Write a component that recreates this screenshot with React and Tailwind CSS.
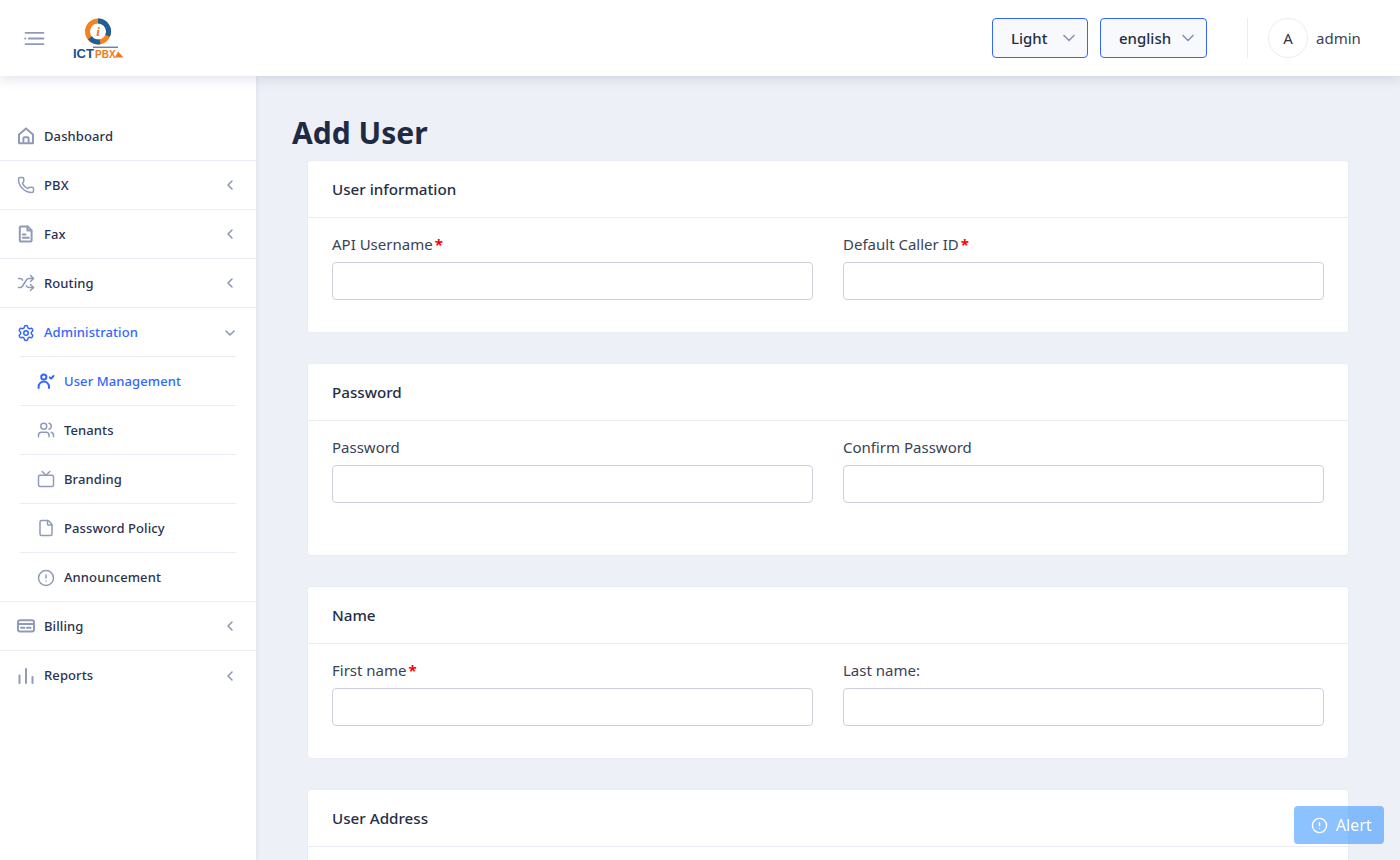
import { ChevronDown, ChevronLeft, CircleAlert, File, Phone, Settings, Shuffle, Tv, Users } from 'lucide-react';

const font = { fontFamily: '"Noto Sans", "Open Sans", sans-serif' };

const HomeIcon = (props) => (
  <svg viewBox="0 0 18 18" fill="none" stroke="currentColor" strokeWidth="1.7" strokeLinejoin="round" {...props}>
    <path d="M2 16.2V7.4L9 1.4l7 6v8.8z" />
    <path d="M6.4 16.2v-5a1 1 0 0 1 1-1h3.2a1 1 0 0 1 1 1v5" />
  </svg>
);

const FaxIcon = (props) => (
  <svg viewBox="0 0 18 18" fill="none" stroke="currentColor" strokeWidth="1.7" strokeLinejoin="round" strokeLinecap="round" {...props}>
    <path d="M4 1.4h6.6l4 4v10a1.2 1.2 0 0 1-1.2 1.2H4a1.2 1.2 0 0 1-1.2-1.2V2.6A1.2 1.2 0 0 1 4 1.4z" />
    <path d="M10.4 1.6v3.8h4M5.8 9.6h2.6M5.8 12.8h6" />
  </svg>
);

const UserCheckIcon = (props) => (
  <svg viewBox="0 0 18 18" fill="none" stroke="currentColor" strokeWidth="1.8" strokeLinecap="round" strokeLinejoin="round" {...props}>
    <circle cx="6.8" cy="5" r="2.6" />
    <path d="M1.6 16v-1.2a5.2 5.2 0 0 1 10.4 0V16" />
    <path d="M12.8 5.4l1.3 1.2 2.4-2.6" />
  </svg>
);

const CardIcon = (props) => (
  <svg viewBox="0 0 18 18" fill="none" stroke="currentColor" strokeWidth="1.7" strokeLinecap="round" {...props}>
    <rect x="1" y="3.2" width="16" height="11.4" rx="2" />
    <path d="M1 7h16M4 10.8h3.4M10 10.8h3.6" />
  </svg>
);

const ReportsIcon = (props) => (
  <svg viewBox="0 0 18 18" fill="none" stroke="currentColor" strokeWidth="1.7" strokeLinecap="round" {...props}>
    <path d="M2.5 8.5V16M9 2v14M15.5 10v6" />
  </svg>
);

const MenuIcon = (props) => (
  <svg viewBox="0 0 22 16" fill="none" stroke="currentColor" strokeWidth="2" strokeLinecap="round" {...props}>
    <path d="M1.5 2h19M5 8h15.5M1.5 14h19M1 8h.2" />
  </svg>
);

const Logo = () => (
  <svg viewBox="0 0 52 42" className="w-[52px] h-[42px]">
    <circle cx="25" cy="13.5" r="10.5" fill="none" stroke="#f58220" strokeWidth="5" />
    <path d="M25 3a10.5 10.5 0 0 1 9.6 14.8" fill="none" stroke="#1d5f96" strokeWidth="5" />
    <path d="M27 23.8a10.5 10.5 0 0 1-10-4" fill="none" stroke="#1d5f96" strokeWidth="5" />
    <circle cx="25" cy="13.5" r="6" fill="#fff" />
    <text x="25" y="18" textAnchor="middle" fontSize="13" fontWeight="700" fontStyle="italic" fill="#e8731c" fontFamily="Liberation Serif, serif">i</text>
    <text x="0" y="39.5" fontSize="13" fill="#17508a" fontWeight="700" fontFamily="Liberation Sans, sans-serif">ICT</text>
    <text x="22" y="39.5" fontSize="10" fontWeight="700" fill="#ee7a22" fontFamily="Liberation Sans, sans-serif">PBX</text>
    <path d="M20 29.2h25" stroke="#17508a" strokeWidth="1" />
    <path d="M42 39.5l3-6 5.5 6z" fill="#ee7a22" />
  </svg>
);

const MenuItem = ({ icon: Icon, label, arrow, active, open, sub, last }) => (
  <div className={sub ? 'px-5' : ''}>
    <div
      className={`h-[49px] flex items-center ${sub ? 'pl-[17px]' : 'px-[17px]'} ${last ? '' : 'border-b border-[#e9ecf4]'} ${
        active ? 'text-[#3366ff]' : 'text-[#2b3350]'
      }`}
    >
      <Icon className={`w-[18px] h-[18px] shrink-0 ${active ? 'text-[#3366ff]' : 'text-[#8f9bb8]'}`} strokeWidth={2} />
      <span className="ml-[9px] text-[13px] tracking-[0.1px] font-medium leading-none">{label}</span>
      {arrow && (
        open ? (
          <ChevronDown className="ml-auto mr-px w-4 h-4 text-[#8a94ad]" strokeWidth={2.2} />
        ) : (
          <ChevronLeft className="ml-auto mr-px w-4 h-4 text-[#8a94ad]" strokeWidth={2.2} />
        )
      )}
    </div>
  </div>
);

const Field = ({ label, required }) => (
  <div>
    <label className="block h-[18px] text-[15px] leading-[18px] text-[#3a4256]">
      {label}
      {required && <span className="ml-[2px] font-bold text-[#ff0000]">*</span>}
    </label>
    <input className="block mt-[9px] w-full h-[38px] rounded border border-[#ced1d9] bg-white" />
  </div>
);

const Card = ({ title, fields, extra, children }) => (
  <section className="bg-white rounded border border-[#e9ecf4]">
    <h2 className="h-[57px] px-6 flex items-center border-b border-[#e9ecf4] text-[15.2px] font-medium text-[#252e45]">
      {title}
    </h2>
    {fields && (
      <div className={`px-6 pt-[17px] grid grid-cols-2 gap-[30px] ${extra ? 'pb-[52px]' : 'pb-[32px]'}`}>
        {fields.map((f) => (
          <Field key={f.label} {...f} />
        ))}
      </div>
    )}
    {children}
  </section>
);

const SelectBox = ({ label, width }) => (
  <div className={`${width} h-10 flex items-center justify-between pl-[18px] pr-2 rounded border border-[#3366ff] bg-[#f8f9fd] text-[#252e45]`}>
    <span className="text-[15px] font-medium">{label}</span>
    <ChevronDown className="w-5 h-5 text-[#8a94ad]" strokeWidth={2} />
  </div>
);

export default function App() {
  return (
    <div style={font} className="h-[860px] overflow-hidden bg-[#edf0f7] flex flex-col">
      <header className="relative z-10 h-[76px] shrink-0 bg-white shadow-[0_2px_12px_rgba(60,70,110,0.18)] flex items-center pl-6 pr-10">
        <MenuIcon className="w-[21px] h-[15px] text-[#8f9bb8]" />
        <div className="ml-[28px] mt-px">
          <Logo />
        </div>
        <div className="ml-auto flex items-center">
          <SelectBox label="Light" width="w-24" />
          <div className="ml-3">
            <SelectBox label="english" width="w-[107px]" />
          </div>
          <div className="ml-10 h-10 border-l border-[#e9ecf4]" />
          <div className="ml-5 w-10 h-10 rounded-full border border-[#e9ecf4] flex items-center justify-center text-[15px] text-[#2b3350]">
            A
          </div>
          <span className="ml-2 w-[44px] whitespace-nowrap text-[15px] text-[#3a4256]">admin</span>
        </div>
      </header>

      <div className="flex flex-1 min-h-0">
        <aside className="w-[256px] shrink-0 bg-white pt-9 shadow-[1px_0_4px_rgba(60,70,110,0.08)]">
          <MenuItem icon={HomeIcon} label="Dashboard" />
          <MenuItem icon={Phone} label="PBX" arrow />
          <MenuItem icon={FaxIcon} label="Fax" arrow />
          <MenuItem icon={Shuffle} label="Routing" arrow />
          <MenuItem icon={Settings} label="Administration" arrow open active last />
          <div className="mx-5 border-t border-[#e9ecf4] -mt-px" />
          <MenuItem icon={UserCheckIcon} label="User Management" sub active />
          <MenuItem icon={Users} label="Tenants" sub />
          <MenuItem icon={Tv} label="Branding" sub />
          <MenuItem icon={File} label="Password Policy" sub />
          <MenuItem icon={CircleAlert} label="Announcement" sub last />
          <div className="border-t border-[#e9ecf4] -mt-px" />
          <MenuItem icon={CardIcon} label="Billing" arrow />
          <MenuItem icon={ReportsIcon} label="Reports" arrow last />
        </aside>

        <main className="flex-1 min-w-0 pt-[36px] pl-9 pr-[51px]">
          <h1 className="h-12 text-[30px] leading-[42px] font-bold text-[#1f2a44]">Add User</h1>
          <div className="ml-[15px] flex flex-col gap-[30px]">
            <Card
              title="User information"
              fields={[
                { label: 'API Username', required: true },
                { label: 'Default Caller ID', required: true },
              ]}
            />
            <Card title="Password" extra fields={[{ label: 'Password' }, { label: 'Confirm Password' }]} />
            <Card
              title="Name"
              fields={[{ label: 'First name', required: true }, { label: 'Last name:' }]}
            />
            <Card title="User Address">
              <div className="h-20" />
            </Card>
          </div>
        </main>
      </div>

      <div className="fixed right-4 bottom-4 w-[90px] h-[38px] rounded flex items-center pl-[17px] gap-2 bg-[#1985ff]/50 text-white">
        <CircleAlert className="w-[17px] h-[17px]" strokeWidth={2} />
        <span className="text-[16px]">Alert</span>
      </div>
    </div>
  );
}
